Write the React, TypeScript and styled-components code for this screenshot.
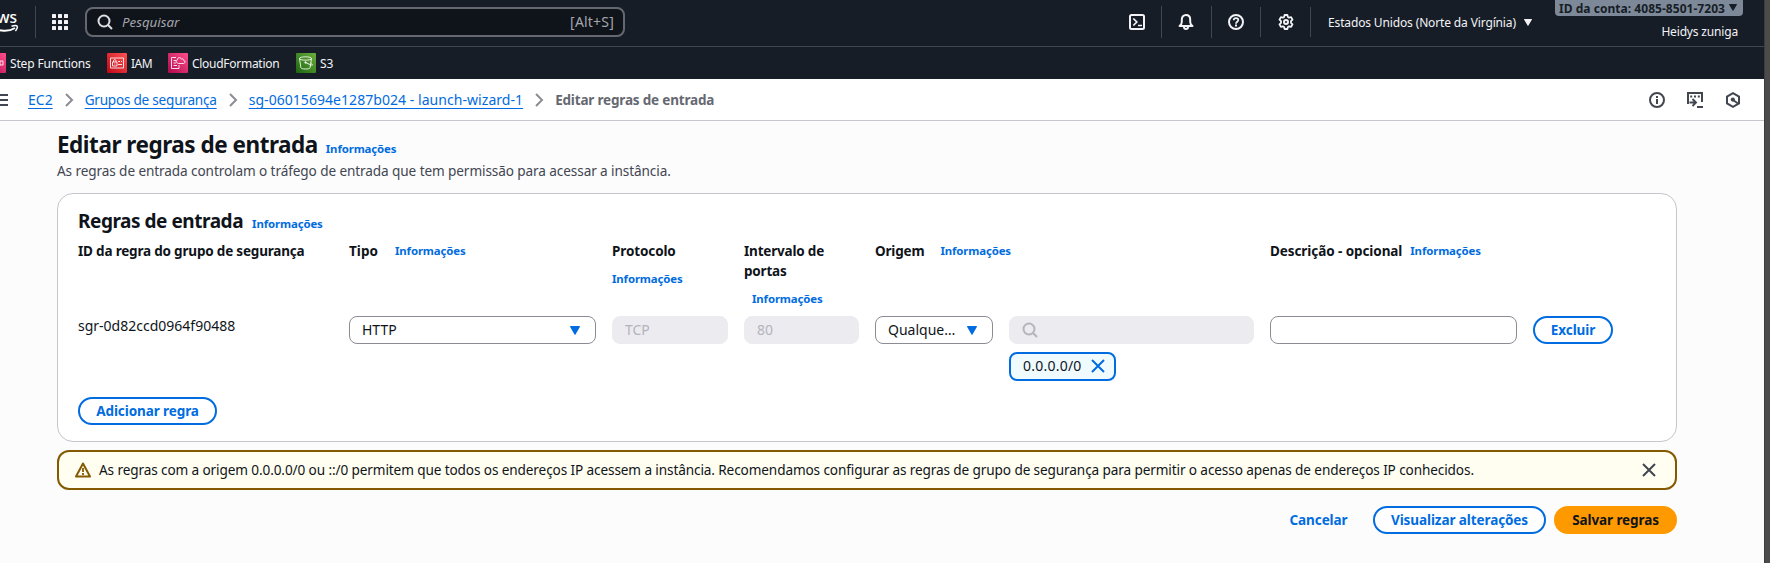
import React from "react";
import styled, { createGlobalStyle, css } from "styled-components";

const GlobalStyle = createGlobalStyle`
  *, *::before, *::after { box-sizing: border-box; }
  html, body { margin: 0; padding: 0; }
  body {
    font-family: "Noto Sans", sans-serif;
    font-size: 14px;
    line-height: 20px;
    color: #0f141a;
    background: #fcfcfd;
    overflow: hidden;
  }
  h1, h2, p { margin: 0; }
  button { font: inherit; cursor: pointer; }
  svg { display: block; flex: none; }
`;

const Window = styled.div`
  display: flex;
  width: 1770px;
  height: 563px;
  overflow: hidden;
`;

const Page = styled.div`
  flex: 1;
  min-width: 0;
  display: flex;
  flex-direction: column;
`;

const WindowEdge = styled.div`
  width: 6px;
  background: #4b4b4b;
  border-left: 1px solid #3c3c3c;
`;

/* ---------- top navigation ---------- */

const TopNav = styled.header`
  display: flex;
  height: 47px;
  background: #161d26;
  color: #f3f3f7;
  border-bottom: 1px solid #424650;
`;

const Logo = styled.a`
  width: 35px;
  padding-top: 6px;
  overflow: hidden;
`;

const Separator = styled.span<{ $short?: boolean }>`
  width: 1px;
  height: ${(p) => (p.$short ? 30 : 32)}px;
  margin-top: ${(p) => (p.$short ? 7 : 6)}px;
  background: #424650;
`;

const NavIcon = styled.button<{ $width: number; $trim?: boolean }>`
  width: ${(p) => p.$width}px;
  height: 44px;
  padding: 0 ${(p) => (p.$trim ? 1 : 0)}px 0 0;
  border: 0;
  background: none;
  color: inherit;
  display: flex;
  align-items: center;
  justify-content: center;
`;

const NavSearch = styled.div`
  display: flex;
  align-items: center;
  width: 540px;
  height: 30px;
  margin-top: 7px;
  padding: 0 9px 0 10px;
  border: 2px solid #656871;
  border-radius: 8px;
  background: #0f141a;
  color: #a4a4ad;
  letter-spacing: 0.2px;
  svg { color: #dedee3; }
`;

const SearchPlaceholder = styled.span`
  flex: 1;
  margin-left: 9px;
  font-style: italic;
  font-size: 13.3px;
  letter-spacing: 0;
`;

const Tools = styled.div`
  display: flex;
  margin-left: auto;
`;

const Region = styled.button`
  display: flex;
  align-items: center;
  gap: 8px;
  height: 46px;
  padding: 0;
  margin-left: 17px;
  width: 227px;
  border: 0;
  background: none;
  color: inherit;
  font-size: 12px;
  letter-spacing: -0.14px;
  white-space: nowrap;
  svg { margin-top: -2px; }
`;

const Account = styled.div`
  display: flex;
  flex-direction: column;
  align-items: flex-end;
  width: 188px;
  margin-right: 21px;
  font-size: 12px;
`;

const AccountId = styled.div`
  display: flex;
  align-items: center;
  justify-content: space-between;
  width: 188px;
  height: 16px;
  padding: 2px 6px 0 4px;
  border-radius: 0 0 4px 4px;
  background: #7d8998;
  color: #161d26;
  font-weight: 700;
  font-size: 12px;
  line-height: 16px;
  letter-spacing: 0.04px;
  white-space: nowrap;
  svg { margin-top: -3px; }
`;

const UserName = styled.div`
  margin: 6px 5px 0 0;
  letter-spacing: -0.17px;
`;

/* ---------- favourites ---------- */

const Favourites = styled.nav`
  display: flex;
  align-items: center;
  height: 32px;
  background: #161d26;
  color: #f3f3f7;
  font-size: 12px;
`;

const Favourite = styled.a<{ $width: number; $cut?: boolean; $tracking?: number }>`
  display: flex;
  align-items: center;
  gap: 4px;
  width: ${(p) => p.$width}px;
  margin-left: ${(p) => (p.$cut ? -14 : 0)}px;
  letter-spacing: ${(p) => p.$tracking ?? 0}px;
  white-space: nowrap;
`;

const FavouriteName = styled.span`
  padding-top: 2px;
`;

/* ---------- breadcrumb ---------- */

const BreadcrumbBar = styled.div`
  display: flex;
  align-items: center;
  height: 42px;
  padding-right: 23px;
  background: #fff;
  border-bottom: 1px solid #c6c6cd;
`;

const MenuButton = styled.button`
  width: 28px;
  padding: 0;
  border: 0;
  background: none;
  color: #424650;
`;

const Crumbs = styled.div`
  display: flex;
  align-items: center;
  flex: 1;
  white-space: nowrap;
`;

const Crumb = styled.a<{ $size?: number; $tracking?: number }>`
  color: #006ce0;
  font-size: ${(p) => p.$size ?? 14}px;
  letter-spacing: ${(p) => p.$tracking ?? 0}px;
  text-decoration: underline;
  text-underline-offset: 3px;
  text-decoration-thickness: 1px;
  text-decoration-skip-ink: none;
`;

const CurrentCrumb = styled.span`
  color: #656871;
  font-weight: 700;
  font-size: 13.5px;
  letter-spacing: -0.18px;
`;

const PanelIcons = styled.div`
  display: flex;
  gap: 22px;
  color: #424650;
`;

/* ---------- content ---------- */

const Content = styled.main`
  flex: 1;
  padding: 9px 87px 0 57px;
  background: #fcfcfd;
`;

const Heading = styled.div<{ $height: number; $gap?: number }>`
  display: flex;
  align-items: baseline;
  gap: ${(p) => p.$gap ?? 9}px;
  height: ${(p) => p.$height}px;
`;

const Title = styled.h1`
  font-size: 22.5px;
  line-height: 30px;
  font-weight: 700;
  letter-spacing: -0.48px;
  white-space: nowrap;
`;

const Subtitle = styled.p`
  margin-top: 1px;
  color: #424650;
  font-size: 13.6px;
  letter-spacing: -0.1px;
`;

const SectionTitle = styled.h2`
  font-size: 19px;
  line-height: 24px;
  font-weight: 700;
  letter-spacing: -0.46px;
  white-space: nowrap;
`;

const InfoLink = styled.a`
  color: #006ce0;
  font-size: 11.4px;
  font-weight: 700;
  line-height: 20px;
  letter-spacing: -0.12px;
  white-space: nowrap;
`;

const Card = styled.section`
  margin-top: 12px;
  height: 249px;
  padding: 15px 20px 0;
  border: 1px solid #c6c6cd;
  border-radius: 16px;
  background: #fff;
`;

const gridColumns = css`
  display: grid;
  grid-template-columns: 255px 247px 116px 115px 379px 247px 80px;
  column-gap: 16px;
`;

const HeaderRow = styled.div`
  ${gridColumns}
  height: 75px;
  margin-top: 8px;
  font-size: 13.5px;
  font-weight: 700;
`;

const HeaderCell = styled.div<{ $gap?: number; $stacked?: boolean; $indent?: number; $tracking?: number }>`
  display: flex;
  flex-direction: ${(p) => (p.$stacked ? "column" : "row")};
  gap: ${(p) => p.$gap ?? 8}px;
  letter-spacing: ${(p) => p.$tracking ?? -0.19}px;
  white-space: ${(p) => (p.$stacked ? "normal" : "nowrap")};
  ${InfoLink} { margin-left: ${(p) => p.$indent ?? 0}px; }
`;

const RuleRow = styled.div`
  ${gridColumns}
  height: 81px;
  align-items: start;
`;

const RuleId = styled.span``;

const control = css`
  display: flex;
  align-items: center;
  height: 28px;
  padding: 0 12px;
  border: 1px solid #8c8c94;
  border-radius: 8px;
  background: #fff;
`;

const Select = styled.div`
  ${control}
  justify-content: space-between;
  padding-right: 15px;
  svg { color: #006ce0; }
`;

const Field = styled.div<{ $disabled?: boolean }>`
  ${control}
  ${(p) =>
    p.$disabled &&
    css`
      background: #ebebf0;
      border-color: #ebebf0;
      color: #b4b4bb;
    `}
`;

const Source = styled.div`
  display: grid;
  grid-template-columns: 118px 245px;
  column-gap: 16px;
  row-gap: 8px;
`;

const Token = styled.div`
  grid-column: 2;
  justify-self: start;
  display: flex;
  align-items: center;
  justify-content: space-between;
  width: 107px;
  height: 29px;
  padding: 0 8px 1px 12px;
  border: 2px solid #006ce0;
  border-radius: 8px;
  background: #f0fbff;
  letter-spacing: 0.23px;
  svg { color: #006ce0; }
`;

const Button = styled.button<{ $variant?: "primary" | "link"; $width: number }>`
  display: flex;
  align-items: center;
  justify-content: center;
  width: ${(p) => p.$width}px;
  height: 28px;
  padding: 0;
  border: 2px solid #006ce0;
  border-radius: 20px;
  background: #fff;
  color: #006ce0;
  font-weight: 700;
  font-size: 13.5px;
  white-space: nowrap;
  letter-spacing: -0.09px;
  ${(p) =>
    p.$variant === "primary" &&
    css`
      background: #ff9900;
      border-color: #ff9900;
      color: #0f141a;
    `}
  ${(p) =>
    p.$variant === "link" &&
    css`
      background: transparent;
      border-color: transparent;
    `}
`;

const Alert = styled.div`
  display: flex;
  align-items: center;
  height: 40px;
  margin-top: 8px;
  padding: 0 18px 0 16px;
  border: 2px solid #855900;
  border-radius: 12px;
  background: #fffef0;
  color: #424650;
  white-space: nowrap;
`;

const AlertText = styled.p`
  flex: 1;
  margin-left: 8px;
  color: #0f141a;
  font-size: 13.6px;
  letter-spacing: -0.112px;
`;

const Actions = styled.footer`
  display: flex;
  justify-content: flex-end;
  gap: 8px;
  margin-top: 16px;
`;

/* ---------- icons ---------- */

const line = { fill: "none", stroke: "currentColor", strokeWidth: 2 } as const;

const AwsLogo = () => (
  <svg width="35" height="34" viewBox="0 0 35 34">
    <text
      x="-12"
      y="17"
      fill="#fff"
      fontFamily="Noto Sans, sans-serif"
      fontSize="17"
      fontWeight="500"
      textLength="29"
      lengthAdjust="spacingAndGlyphs"
    >
      aws
    </text>
    <path d="M-12 18.500C-4 25.500 8 26.500 15 22" fill="none" stroke="#fff" strokeWidth="2" />
    <path d="M11.500 20.200c2.400-.7 4.800-.9 5.500-.2.600.8-.1 3.200-1.600 5" fill="none" stroke="#fff" strokeWidth="1.500" />
  </svg>
);

const AppsIcon = () => (
  <svg width="16" height="16" viewBox="0 0 16 16" fill="currentColor">
    {[0, 6, 12].map((y) => [0, 6, 12].map((x) => <rect key={`${x}-${y}`} x={x} y={y} width="4" height="4" rx=".6" />))}
  </svg>
);

const SearchIcon = () => (
  <svg width="16" height="16" viewBox="0 0 16 16" {...line}>
    <circle cx="7" cy="7" r="5.500" />
    <path d="m15 15-4.200-4.200" />
  </svg>
);

const ShellIcon = () => (
  <svg width="16" height="16" viewBox="0 0 16 16" {...line}>
    <rect x="1" y="1" width="14" height="14" rx="1.500" />
    <path d="m4.300 4.500 3.500 3.500-3.500 3.500M9 11.500h4" strokeWidth="1.700" />
  </svg>
);

const BellIcon = () => (
  <svg width="16" height="16" viewBox="0 0 16 16" {...line} strokeLinejoin="round">
    <path d="M1.500 12h13c-1.700-1.200-2.300-2.300-2.300-4V5.500C12.200 2.800 10.500 1 8 1S3.800 2.800 3.800 5.500V8c0 1.700-.6 2.800-2.300 4Z" />
    <path d="M6 13c0 1.300.7 2 2 2s2-.7 2-2" />
  </svg>
);

const HelpIcon = () => (
  <svg width="16" height="16" viewBox="0 0 16 16" {...line}>
    <circle cx="8" cy="8" r="7" />
    <path d="M5.700 6.200C5.800 4.800 6.700 4.100 8 4.100s2.300.8 2.300 2c0 1.700-2.300 1.700-2.300 3.600" strokeWidth="1.700" />
    <path d="M8 10.600v1.800" />
  </svg>
);

const GearIcon = () => (
  <svg width="16" height="16" viewBox="0 0 16 16" {...line} strokeLinejoin="round">
    <path
      d="M6.600 1h2.800l.5 2 1.200.7 2-.6 1.400 2.500-1.500 1.500v1.800l1.500 1.500-1.400 2.500-2-.6-1.200.7-.5 2H6.600l-.5-2-1.200-.7-2 .6-1.400-2.500L3 8.900V7.100L1.500 5.600l1.400-2.500 2 .6L6.100 3Z"
      strokeWidth="1.800"
    />
    <circle cx="8" cy="8" r="2" />
  </svg>
);

const Caret = ({ width = 10, height = 9 }: { width?: number; height?: number }) => (
  <svg width={width} height={height} viewBox="0 0 10 9" preserveAspectRatio="none" fill="currentColor">
    <path d="M.4 0h9.200q.6.300.2.900L5.500 8.500q-.5.700-1 0L.2.900Q-.2.300.4 0Z" />
  </svg>
);

const ChevronIcon = () => (
  <svg width="32" height="16" viewBox="0 0 32 16" fill="none" stroke="#8c8c94" strokeWidth="2">
    <path d="m13 2 6 6-6 6" />
  </svg>
);

const MenuIcon = () => (
  <svg width="8" height="14" viewBox="0 0 8 14" {...line}>
    <path d="M0 2h8M0 7h8M0 12h8" />
  </svg>
);

const CloseIcon = () => (
  <svg width="16" height="16" viewBox="0 0 16 16" {...line}>
    <path d="m2 2 12 12M14 2 2 14" />
  </svg>
);

const WarningIcon = () => (
  <svg width="16" height="16" viewBox="0 0 16 16" fill="none" stroke="#855900" strokeWidth="2" strokeLinejoin="round">
    <path d="M8 1.500 15 14.500H1Z" />
    <path d="M8 6v4M8 11v2" strokeWidth="1.800" />
  </svg>
);

const InfoIcon = () => (
  <svg width="16" height="16" viewBox="0 0 16 16" {...line}>
    <circle cx="8" cy="8" r="7" />
    <path d="M8 7v5M8 4v2" />
  </svg>
);

const LaunchShellIcon = () => (
  <svg width="16" height="16" viewBox="0 0 16 16" {...line}>
    <path d="M1 12V1h14v9" />
    <path d="M3.200 4.500h2M7 4.500h2M10.800 4.500h2" strokeWidth="1.800" />
    <path d="M2.500 10.500h6M5.500 7l3.500 3.500L5.500 14M10 15h6" strokeWidth="1.900" />
  </svg>
);

const HexIcon = () => (
  <svg width="16" height="16" viewBox="0 0 16 16" {...line}>
    <path d="M8 1.200 14 4.600v6.800L8 14.800l-6-3.400V4.600Z" />
    <circle cx="7.800" cy="7.600" r="2.100" fill="currentColor" stroke="none" />
    <path d="m8 8 5 3.500" />
  </svg>
);

type Service = "steps" | "iam" | "cfn" | "s3";

const palette: Record<Service, [string, string]> = {
  steps: ["#b0084d", "#ff4f8b"],
  iam: ["#bd0816", "#ff5252"],
  cfn: ["#b0084d", "#ff4f8b"],
  s3: ["#1b660f", "#6cae3e"],
};

const ServiceIcon = ({ kind }: { kind: Service }) => (
  <svg width="20" height="20" viewBox="0 0 20 20" fill="none" stroke="#fff" strokeWidth=".85" strokeLinejoin="round">
    <defs>
      <linearGradient id={`fill-${kind}`} x1="0" y1="1" x2="1" y2="0">
        <stop offset="0" stopColor={palette[kind][0]} />
        <stop offset="1" stopColor={palette[kind][1]} />
      </linearGradient>
    </defs>
    <rect width="20" height="20" rx="1" fill={`url(#fill-${kind})`} stroke="none" />
    {kind === "steps" && <path d="M8 4.500h5v3H8zM8 12.500h5v3H8zM14 8h3v4h-3z" />}
    {kind === "iam" && (
      <>
        <path d="M3.500 5h13v10h-13zM5.500 9h4.500v4H5.500zM6.500 9V7.800c0-1.600 2.500-1.600 2.500 0V9M7.800 10.500v1" />
        <path d="M11 8.500h2M14 8.500h1M11 11.500h4" />
      </>
    )}
    {kind === "cfn" && (
      <>
        <path d="M8 4.500H3.500v11h7.500V12M5.500 7.500H8M5.500 10H8M5.500 12.500H9" />
        <path d="M10.500 10.500h4.800c2.200 0 2.200-3.200.1-3.400 0-1.400-1.300-1.800-2-1-.9-2.200-4.200-1.800-4.100.9-1.700.3-1.500 3 1.200 3.500Z" />
      </>
    )}
    {kind === "s3" && (
      <>
        <ellipse cx="9.500" cy="5.500" rx="6" ry="1.700" />
        <path d="m3.500 5.500 1.400 9.300c.5 1.600 8.700 1.600 9.200 0l1.400-9.300M9.500 9.500l5 2.300c3 1.200 2-.3.300-1.800" />
        <circle cx="9.500" cy="9.500" r=".7" fill="#fff" />
      </>
    )}
  </svg>
);

const Info = () => <InfoLink>Informações</InfoLink>;

export default function App() {
  return (
    <Window>
      <GlobalStyle />
      <Page>
        <TopNav>
          <Logo>
            <AwsLogo />
          </Logo>
          <Separator />
          <NavIcon $width={49} $trim>
            <AppsIcon />
          </NavIcon>
          <NavSearch>
            <SearchIcon />
            <SearchPlaceholder>Pesquisar</SearchPlaceholder>
            <span>[Alt+S]</span>
          </NavSearch>
          <Tools>
            <NavIcon $width={48}>
              <ShellIcon />
            </NavIcon>
            <Separator />
            <NavIcon $width={49} $trim>
              <BellIcon />
            </NavIcon>
            <Separator />
            <NavIcon $width={48}>
              <HelpIcon />
            </NavIcon>
            <Separator $short />
            <NavIcon $width={49}>
              <GearIcon />
            </NavIcon>
            <Separator $short />
            <Region>
              Estados Unidos (Norte da Virgínia)
              <Caret width={8} height={7} />
            </Region>
            <Account>
              <AccountId>
                ID da conta: 4085-8501-7203
                <Caret width={8} height={7} />
              </AccountId>
              <UserName>Heidys zuniga</UserName>
            </Account>
          </Tools>
        </TopNav>

        <Favourites>
          <Favourite $width={121} $cut $tracking={-0.16}>
            <ServiceIcon kind="steps" />
            <FavouriteName>Step Functions</FavouriteName>
          </Favourite>
          <Favourite $width={61} $tracking={-0.5}>
            <ServiceIcon kind="iam" />
            <FavouriteName>IAM</FavouriteName>
          </Favourite>
          <Favourite $width={128} $tracking={-0.28}>
            <ServiceIcon kind="cfn" />
            <FavouriteName>CloudFormation</FavouriteName>
          </Favourite>
          <Favourite $width={60}>
            <ServiceIcon kind="s3" />
            <FavouriteName>S3</FavouriteName>
          </Favourite>
        </Favourites>

        <BreadcrumbBar>
          <MenuButton>
            <MenuIcon />
          </MenuButton>
          <Crumbs>
            <Crumb>EC2</Crumb>
            <ChevronIcon />
            <Crumb $size={13.6} $tracking={-0.24}>
              Grupos de segurança
            </Crumb>
            <ChevronIcon />
            <Crumb $tracking={0.05}>sg-06015694e1287b024 - launch-wizard-1</Crumb>
            <ChevronIcon />
            <CurrentCrumb>Editar regras de entrada</CurrentCrumb>
          </Crumbs>
          <PanelIcons>
            <InfoIcon />
            <LaunchShellIcon />
            <HexIcon />
          </PanelIcons>
        </BreadcrumbBar>

        <Content>
          <Heading $height={30} $gap={8}>
            <Title>Editar regras de entrada</Title>
            <Info />
          </Heading>
          <Subtitle>As regras de entrada controlam o tráfego de entrada que tem permissão para acessar a instância.</Subtitle>

          <Card>
            <Heading $height={24}>
              <SectionTitle>Regras de entrada</SectionTitle>
              <Info />
            </Heading>
            <HeaderRow>
              <HeaderCell>ID da regra do grupo de segurança</HeaderCell>
              <HeaderCell $gap={17} $tracking={0.05}>
                Tipo <Info />
              </HeaderCell>
              <HeaderCell $stacked $tracking={-0.12}>
                Protocolo <Info />
              </HeaderCell>
              <HeaderCell $stacked $indent={8}>
                Intervalo de portas <Info />
              </HeaderCell>
              <HeaderCell $gap={16}>
                Origem <Info />
              </HeaderCell>
              <HeaderCell $tracking={-0.08}>
                Descrição - opcional <Info />
              </HeaderCell>
            </HeaderRow>
            <RuleRow>
              <RuleId>sgr-0d82ccd0964f90488</RuleId>
              <Select>
                HTTP <Caret />
              </Select>
              <Field $disabled>TCP</Field>
              <Field $disabled>80</Field>
              <Source>
                <Select>
                  Qualque… <Caret />
                </Select>
                <Field $disabled>
                  <SearchIcon />
                </Field>
                <Token>
                  0.0.0.0/0 <CloseIcon />
                </Token>
              </Source>
              <Field />
              <Button $width={80}>Excluir</Button>
            </RuleRow>
            <Button $width={139}>Adicionar regra</Button>
          </Card>

          <Alert>
            <WarningIcon />
            <AlertText>
              As regras com a origem 0.0.0.0/0 ou ::/0 permitem que todos os endereços IP acessem a instância. Recomendamos
              configurar as regras de grupo de segurança para permitir o acesso apenas de endereços IP conhecidos.
            </AlertText>
            <CloseIcon />
          </Alert>

          <Actions>
            <Button $variant="link" $width={93}>
              Cancelar
            </Button>
            <Button $width={173}>Visualizar alterações</Button>
            <Button $variant="primary" $width={123}>
              Salvar regras
            </Button>
          </Actions>
        </Content>
      </Page>
      <WindowEdge />
    </Window>
  );
}
